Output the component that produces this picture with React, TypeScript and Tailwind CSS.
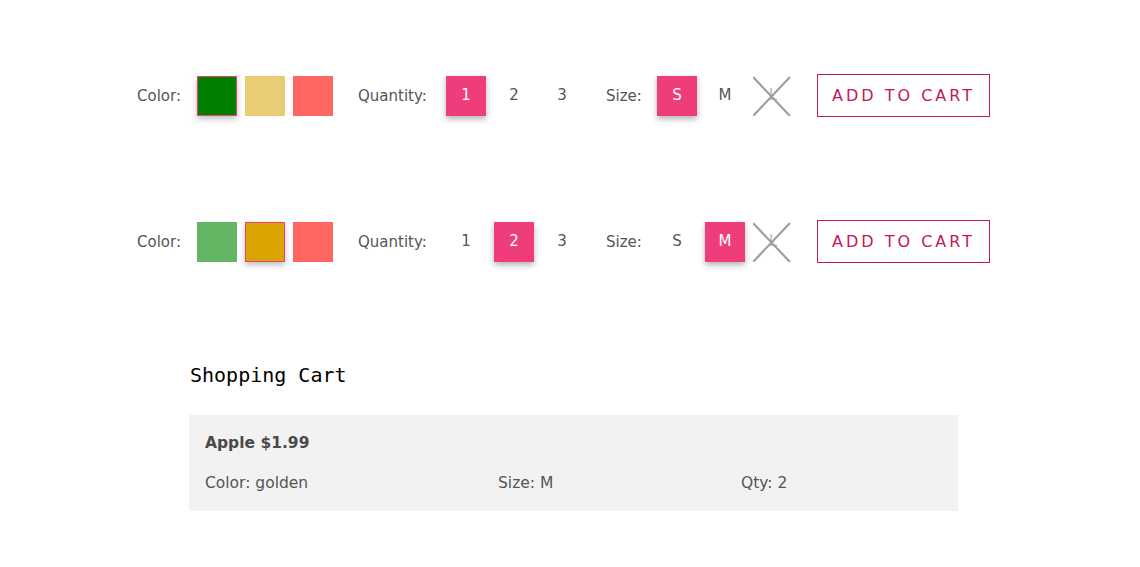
import React from 'react';

type Swatch = { color: string; selected?: boolean };

interface RowProps {
  swatches: Swatch[];
  qty: number;
  size: string;
}

const PINK = 'bg-[#ef3c7b]';

const OptionRow: React.FC<RowProps> = ({ swatches, qty, size }) => {
  return (
    <div className="flex h-[43px] items-center pl-[137px] text-[15px] text-[#555]">
      {/* Color */}
      <span className="w-[60px] translate-y-px">Color:</span>
      <div className="flex gap-2">
        {swatches.map((s, i) => (
          <div
            key={i}
            className={`h-10 w-10 ${s.selected ? 'border border-[#ef3c7b] shadow-[0_3px_6px_rgba(0,0,0,0.25)]' : ''}`}
            style={{ backgroundColor: s.color }}
          />
        ))}
      </div>

      {/* Quantity */}
      <div className="ml-[25px] flex items-center">
        <span className="w-[88px] translate-y-px">Quantity:</span>
        <div className="flex gap-2">
          {[1, 2, 3].map((n) => (
            <div
              key={n}
              className={`flex h-10 w-10 items-center justify-center ${
                n === qty ? `${PINK} text-white shadow-[0_3px_6px_rgba(0,0,0,0.3)]` : ''
              }`}
            >
              {n}
            </div>
          ))}
        </div>
      </div>

      {/* Size */}
      <div className="ml-6 flex items-center">
        <span className="w-[51px] translate-y-px">Size:</span>
        <div className="flex gap-2">
          {['S', 'M'].map((s) => (
            <div
              key={s}
              className={`flex h-10 w-10 items-center justify-center ${
                s === size ? `${PINK} text-white shadow-[0_3px_6px_rgba(0,0,0,0.3)]` : ''
              }`}
            >
              {s}
            </div>
          ))}
          <div className="relative flex h-10 w-10 items-center justify-center text-[#bbb]">
            L
            <svg className="absolute inset-0" width="40" height="40" viewBox="0 0 40 40">
              <line x1="0" y1="1" x2="37" y2="40" stroke="#9e9e9e" strokeWidth="2.2" />
              <line x1="37" y1="1" x2="0" y2="40" stroke="#9e9e9e" strokeWidth="2.2" />
            </svg>
          </div>
        </div>
      </div>

      <button className="ml-6 h-[43px] w-[173px] border border-solid border-[#c2185b] text-[16px] tracking-[3px] text-[#c2185b]">
        ADD TO CART
      </button>
    </div>
  );
};

export default function App() {
  return (
    <div className="min-h-[567px] w-full bg-white font-['DejaVu_Sans',sans-serif]">
      <div className="pt-[74px]">
        <OptionRow
          swatches={[
            { color: '#008000', selected: true },
            { color: '#eacb76' },
            { color: '#ff6662' },
          ]}
          qty={1}
          size="S"
        />
      </div>
      <div className="pt-[103px]">
        <OptionRow
          swatches={[
            { color: '#63b663' },
            { color: '#daa500', selected: true },
            { color: '#ff6662' },
          ]}
          qty={2}
          size="M"
        />
      </div>

      <div className="ml-[189px] mt-[98px] w-[769px]">
        <h2 className="pl-px font-['DejaVu_Sans_Mono',monospace] text-[20px] leading-7 text-black">
          Shopping Cart
        </h2>
        <div className="mt-[26px] bg-[#f2f2f2] px-4 pb-[13px] pt-[13px] text-[15.5px] text-[#555]">
          <div className="font-semibold leading-[30px] text-[#4a4a4a]">Apple $1.99</div>
          <div className="mt-[10px] flex leading-[30px]">
            <span className="w-[293px]">Color: golden</span>
            <span className="w-[243px]">Size: M</span>
            <span>Qty: 2</span>
          </div>
        </div>
      </div>
    </div>
  );
}
